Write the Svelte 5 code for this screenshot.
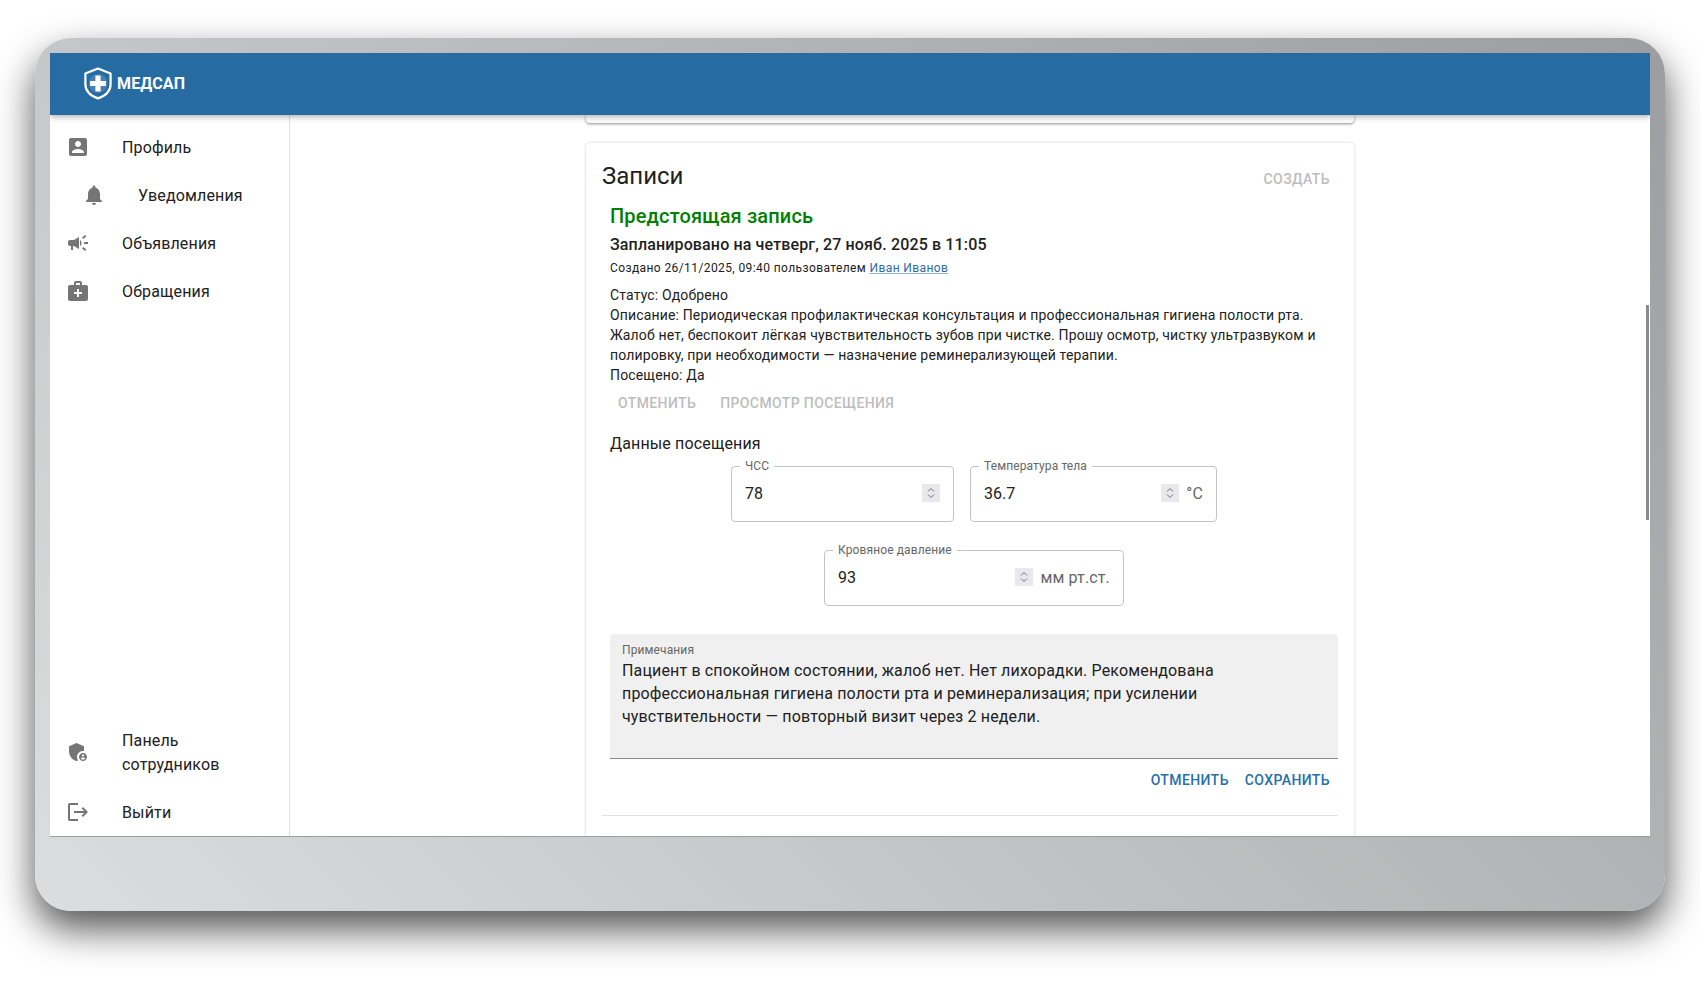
<script lang="ts">
  const navTop = [
    { label: 'Профиль', d: 'M3 5v14c0 1.1.89 2 2 2h14c1.1 0 2-.9 2-2V5c0-1.1-.9-2-2-2H5c-1.11 0-2 .9-2 2zm12 4c0 1.66-1.34 3-3 3s-3-1.34-3-3 1.34-3 3-3 3 1.34 3 3zm-9 8c0-2 4-3.1 6-3.1s6 1.1 6 3.1v1H6v-1z' },
    { label: 'Уведомления', nested: true, d: 'M12 22c1.1 0 2-.9 2-2h-4c0 1.1.89 2 2 2zm6-6v-5c0-3.07-1.64-5.64-4.5-6.32V4c0-.83-.67-1.5-1.5-1.5s-1.5.67-1.5 1.5v.68C7.63 5.36 6 7.92 6 11v5l-2 2v1h16v-1l-2-2z' },
    { label: 'Объявления', d: 'M18 11v2h4v-2h-4zm-2 6.61c.96.71 2.21 1.65 3.2 2.39.4-.53.8-1.07 1.2-1.6-.99-.74-2.24-1.68-3.2-2.4-.4.54-.8 1.08-1.2 1.61zM20.4 5.6c-.4-.53-.8-1.07-1.2-1.6-.99.74-2.24 1.68-3.2 2.4.4.53.8 1.07 1.2 1.6.96-.72 2.21-1.65 3.2-2.4zM4 9c-1.1 0-2 .9-2 2v2c0 1.1.9 2 2 2h1v4h2v-4h1l5 3V6L8 9H4zm11.5 3c0-1.33-.58-2.53-1.5-3.35v6.69c.92-.81 1.5-2.01 1.5-3.34z' },
    { label: 'Обращения', d: 'M20 6h-4V4c0-1.1-.9-2-2-2h-4c-1.1 0-2 .9-2 2v2H4c-1.1 0-2 .9-2 2v12c0 1.1.9 2 2 2h16c1.1 0 2-.9 2-2V8c0-1.1-.9-2-2-2zM10 4h4v2h-4V4zm6 11h-3v3h-2v-3H8v-2h3v-3h2v3h3v2z' }
  ];

  const navBottom = [
    { label: 'Панель сотрудников', d: 'M17 11c.34 0 .67.04 1 .09V6.27L10.5 3 3 6.27v4.91c0 4.54 3.2 8.79 7.5 9.82.55-.13 1.08-.32 1.6-.55-.69-.98-1.1-2.17-1.1-3.45 0-3.31 2.69-6 6-6zM17 13c-2.21 0-4 1.79-4 4s1.79 4 4 4 4-1.79 4-4-1.79-4-4-4zm0 1.38c.62 0 1.12.51 1.12 1.12s-.51 1.12-1.12 1.12-1.12-.51-1.12-1.12.5-1.12 1.12-1.12zm0 5.37c-.93 0-1.74-.46-2.24-1.17.05-.72 1.51-1.08 2.24-1.08s2.19.36 2.24 1.08c-.5.71-1.31 1.17-2.24 1.17z' },
    { label: 'Выйти', d: 'M17 7l-1.41 1.41L18.17 11H8v2h10.17l-2.58 2.58L17 17l5-5zM4 5h8V3H4c-1.1 0-2 .9-2 2v14c0 1.1.9 2 2 2h8v-2H4V5z' }
  ];

  const vitalsTop = [
    { label: 'ЧСС', value: '78', width: 223 },
    { label: 'Температура тела', value: '36.7', unit: '°C', width: 247 }
  ];
  const vitalsBottom = [{ label: 'Кровяное давление', value: '93', unit: 'мм рт.ст.', width: 300 }];
</script>

{#snippet navItem(item)}
  <li class="nav-item" class:nested={item.nested}>
    <svg class="nav-icon" viewBox="0 0 24 24"><path d={item.d} /></svg>
    <span class="nav-label">{item.label}</span>
  </li>
{/snippet}

{#snippet vital(field)}
  <fieldset class="vital" style="width: {field.width}px">
    <legend>{field.label}</legend>
    <span class="vital-value">{field.value}</span>
    <span class="spinner">
      <svg viewBox="0 0 18 18"><path d="M6 7.5 9 4.5l3 3M6 10.5l3 3 3-3" /></svg>
    </span>
    {#if field.unit}
      <span class="vital-unit">{field.unit}</span>
    {/if}
  </fieldset>
{/snippet}

<div class="frame">
  <div class="window">
    <header class="appbar">
      <svg class="logo" viewBox="0 0 30 33">
        <path class="logo-shield" d="M15 1.6 27.6 6.6v10.6c0 6.6-5.2 11.6-12.6 14.2C7.6 28.8 2.4 23.8 2.4 17.2V6.6z" />
        <circle class="logo-disc" cx="15" cy="16.5" r="9.4" />
        <path class="logo-cross" d="M12.4 8.6h5.2v5.3h5.3v5.2h-5.3v5.3h-5.2v-5.3H7.1v-5.2h5.3z" />
      </svg>
      <span class="brand">МЕДСАП</span>
    </header>

    <div class="body">
      <nav class="sidebar">
        <ul class="nav-list">
          {#each navTop as item}
            {@render navItem(item)}
          {/each}
        </ul>
        <ul class="nav-list">
          {#each navBottom as item}
            {@render navItem(item)}
          {/each}
        </ul>
      </nav>

      <main class="content">
        <div class="card-stub"></div>

        <section class="card">
          <div class="card-head">
            <h2 class="card-title">Записи</h2>
            <button class="text-btn disabled" type="button">Создать</button>
          </div>

          <article class="appointment">
            <h3 class="upcoming">Предстоящая запись</h3>
            <p class="scheduled">Запланировано на четверг, 27 нояб. 2025 в 11:05</p>
            <p class="created">Создано 26/11/2025, 09:40 пользователем <a href="#user">Иван Иванов</a></p>

            <div class="details">
              <p>Статус: Одобрено</p>
              <p>Описание: Периодическая профилактическая консультация и профессиональная гигиена полости рта. Жалоб нет, беспокоит лёгкая чувствительность зубов при чистке. Прошу осмотр, чистку ультразвуком и полировку, при необходимости — назначение реминерализующей терапии.</p>
              <p>Посещено: Да</p>
            </div>

            <div class="actions">
              <button class="text-btn disabled" type="button">Отменить</button>
              <button class="text-btn disabled" type="button">Просмотр посещения</button>
            </div>

            <h4 class="visit-title">Данные посещения</h4>

            <div class="vitals">
              <div class="vitals-row">
                {#each vitalsTop as field}
                  {@render vital(field)}
                {/each}
              </div>
              <div class="vitals-row">
                {#each vitalsBottom as field}
                  {@render vital(field)}
                {/each}
              </div>
            </div>

            <div class="notes">
              <span class="notes-label">Примечания</span>
              <p class="notes-text">Пациент в спокойном состоянии, жалоб нет. Нет лихорадки. Рекомендована профессиональная гигиена полости рта и реминерализация; при усилении чувствительности — повторный визит через 2 недели.</p>
            </div>

            <div class="notes-actions">
              <button class="text-btn primary" type="button">Отменить</button>
              <button class="text-btn primary" type="button">Сохранить</button>
            </div>
          </article>

          <hr class="divider" />
        </section>
      </main>
    </div>

    <div class="scroll-thumb"></div>
  </div>
</div>

<style>
  :global(body) {
    margin: 0;
    background: #fff;
    font-family: Roboto, "Liberation Sans", sans-serif;
    color: #212121;
  }

  .frame {
    box-sizing: border-box;
    width: 1630px;
    height: 873px;
    margin: 38px 35px 89px;
    padding: 15px 15px 74px;
    border-radius: 36px;
    background: linear-gradient(45deg, #dcdddf, #9c9da0);
    box-shadow: 0 18px 38px rgba(0, 0, 0, 0.68);
  }

  .window {
    position: relative;
    display: flex;
    flex-direction: column;
    height: 784px;
    box-sizing: border-box;
    overflow: hidden;
    background: #fff;
    border-bottom: 1px solid #9d9d9d;
  }

  .appbar {
    position: relative;
    z-index: 2;
    display: flex;
    align-items: center;
    gap: 4px;
    flex-shrink: 0;
    height: 62px;
    padding-left: 33px;
    padding-bottom: 2px;
    box-sizing: border-box;
    background: #266ca3;
    box-shadow: 0 2px 4px -1px rgba(0, 0, 0, 0.2), 0 4px 5px rgba(0, 0, 0, 0.12);
  }

  .logo {
    width: 30px;
    height: 33px;
  }

  .logo-shield {
    fill: none;
    stroke: #fff;
    stroke-width: 2.2;
    stroke-linejoin: round;
  }

  .logo-disc {
    fill: rgba(255, 255, 255, 0.14);
  }

  .logo-cross {
    fill: #fff;
  }

  .brand {
    color: #fff;
    font-size: 16px;
    font-weight: 700;
    letter-spacing: 0.01em;
  }

  .body {
    display: flex;
    flex: 1;
    min-height: 0;
  }

  .sidebar {
    display: flex;
    flex-direction: column;
    justify-content: space-between;
    flex-shrink: 0;
    box-sizing: border-box;
    width: 240px;
    padding-top: 9px;
    border-right: 1px solid #dfdfdf;
  }

  .nav-list {
    list-style: none;
    margin: 0;
    padding: 0;
  }

  .nav-list:last-child {
    margin-bottom: -1px;
  }

  .nav-item {
    display: flex;
    align-items: center;
    padding: 12px 16px;
    font-size: 16px;
    line-height: 24px;
    letter-spacing: 0.00938em;
  }

  .nav-item.nested {
    padding-left: 32px;
  }

  .nav-icon {
    flex-shrink: 0;
    width: 24px;
    height: 24px;
    margin: -2px 32px 0 0;
    fill: #757575;
  }

  .nav-label {
    max-width: 130px;
  }

  .content {
    flex: 1;
    display: flex;
    flex-direction: column;
    align-items: center;
    min-width: 0;
    overflow: hidden;
  }

  .card-stub {
    flex-shrink: 0;
    box-sizing: border-box;
    width: 768px;
    height: 8px;
    margin-bottom: 20px;
    border-radius: 0 0 4px 4px;
    box-shadow: 0 1px 3px rgba(0, 0, 0, 0.45);
  }

  .card {
    flex-shrink: 0;
    box-sizing: border-box;
    width: 768px;
    padding: 17px 16px 40px;
    border-radius: 4px;
    background: #fff;
    box-shadow: 0 0 3px rgba(0, 0, 0, 0.2);
  }

  .card-head {
    display: flex;
    align-items: center;
    justify-content: space-between;
    height: 32px;
  }

  .card-title {
    margin: 0;
    font-size: 24px;
    font-weight: 400;
    line-height: 32px;
  }

  .text-btn {
    padding: 0 8px;
    height: 36px;
    border: none;
    background: none;
    font-family: inherit;
    font-size: 14px;
    font-weight: 500;
    letter-spacing: 0.028em;
    text-transform: uppercase;
    cursor: pointer;
  }

  .card-head .text-btn {
    margin-top: 5px;
  }

  .text-btn.disabled {
    color: #bdbdbd;
  }

  .text-btn.primary {
    color: #2470a8;
  }

  .appointment {
    padding-left: 8px;
  }

  .upcoming {
    margin: 8px 0 0;
    color: #008000;
    font-size: 20px;
    font-weight: 500;
    line-height: 32px;
    letter-spacing: 0.0075em;
  }

  .scheduled {
    margin: 1px 0 0;
    font-size: 16px;
    font-weight: 500;
    line-height: 24px;
    letter-spacing: 0.00875em;
  }

  .created {
    margin: 1px 0 0;
    font-size: 12px;
    line-height: 20px;
    letter-spacing: 0.03333em;
  }

  .created a {
    color: #2b6ca3;
    text-decoration-color: #8fb3d1;
  }

  .details {
    margin-top: 7px;
    font-size: 14px;
    line-height: 20px;
    letter-spacing: 0.01071em;
  }

  .details p {
    margin: 0;
  }

  .actions {
    display: flex;
    gap: 8px;
    margin-top: 0;
  }

  .visit-title {
    margin: 11px 0 0;
    font-size: 16px;
    font-weight: 400;
    line-height: 24px;
    letter-spacing: 0.00938em;
  }

  .vitals {
    display: flex;
    flex-direction: column;
    gap: 21px;
    margin-top: 3px;
  }

  .vitals-row {
    display: flex;
    justify-content: center;
    gap: 16px;
  }

  .vital {
    display: flex;
    align-items: center;
    box-sizing: border-box;
    height: 63px;
    min-width: 0;
    margin: 0;
    padding: 0 13px 8px;
    border: 1px solid #c4c4c4;
    border-radius: 4px;
  }

  .vital legend {
    margin-left: -5px;
    padding: 0 5px;
    color: #666;
    font-size: 12px;
    line-height: 14px;
    letter-spacing: 0.00938em;
  }

  .vital-value {
    flex: 1;
    font-size: 16px;
  }

  .spinner {
    display: flex;
    width: 18px;
    height: 18px;
    background: #e9e9ed;
  }

  .spinner svg {
    width: 18px;
    height: 18px;
    fill: none;
    stroke: #6f6f72;
    stroke-width: 1;
  }

  .vital-unit {
    margin-left: 7px;
    color: #666;
    font-size: 16px;
    letter-spacing: 0.00938em;
  }

  .notes {
    box-sizing: border-box;
    height: 125px;
    margin-top: 28px;
    padding: 8px 12px 0;
    border-radius: 4px 4px 0 0;
    border-bottom: 1px solid #8c8c8c;
    background: #f0f0f0;
  }

  .notes-label {
    display: block;
    color: #666;
    font-size: 12px;
    line-height: 17px;
    letter-spacing: 0.00938em;
  }

  .notes-text {
    margin: 0;
    font-size: 16px;
    line-height: 23px;
    letter-spacing: 0.00938em;
  }

  .notes-actions {
    display: flex;
    justify-content: flex-end;
    margin-top: 3px;
  }

  .divider {
    height: 1px;
    margin: 17px 0 0;
    border: none;
    background: #e0e0e0;
  }

  .scroll-thumb {
    position: absolute;
    top: 252px;
    right: 1px;
    width: 3px;
    height: 215px;
    background: #8a8a8a;
  }
</style>
